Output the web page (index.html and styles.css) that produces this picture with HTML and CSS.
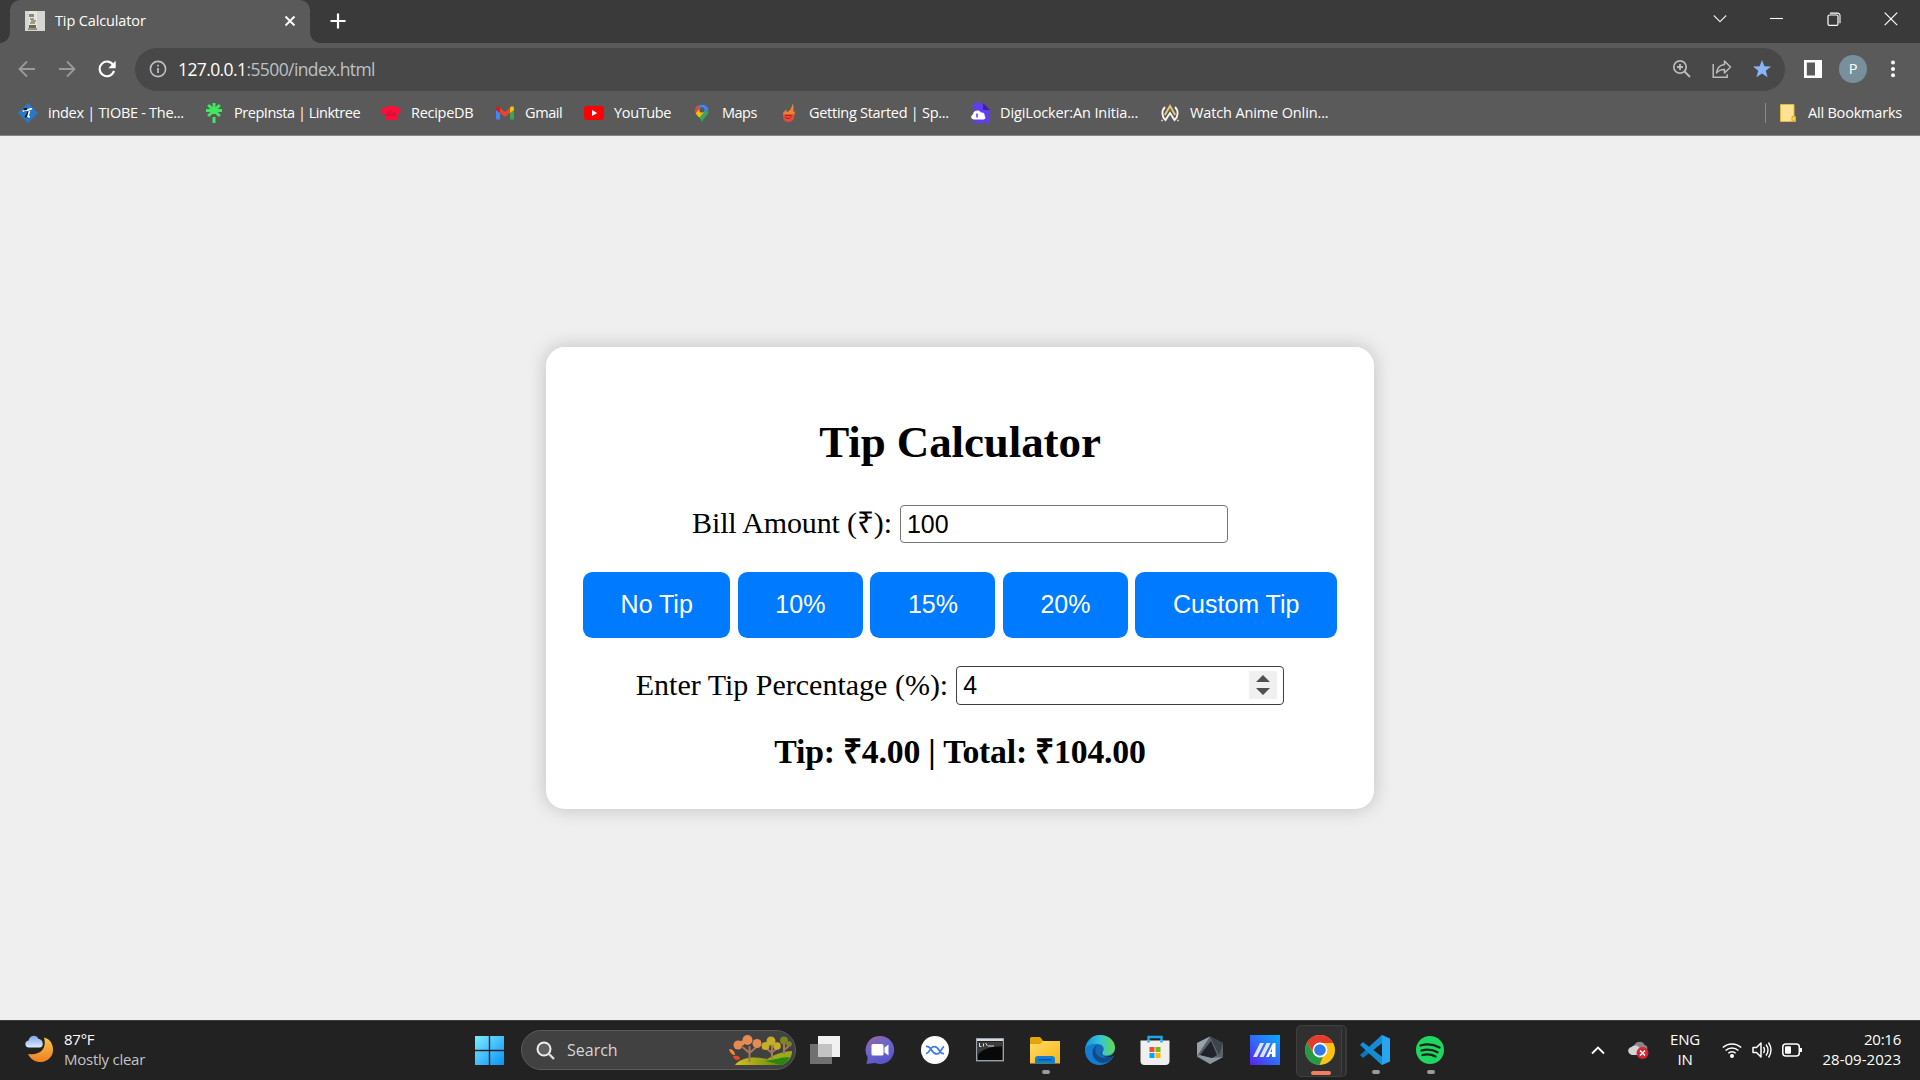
FILE: index.html
```html
<!DOCTYPE html>
<html lang="en">
<head>
<meta charset="utf-8">
<title>Tip Calculator</title>
<link rel="stylesheet" href="styles.css">
</head>
<body>
<header class="browser">
  <div class="tabstrip">
    <div class="tab">
      <svg class="favicon" width="20" height="20" viewBox="0 0 20 20"><rect width="20" height="20" fill="#d6d6d4"/><rect x="4" width="8" height="18" fill="#e6e5df"/><rect x="4" y="3" width="5" height="3" fill="#8b8a68"/><path d="M5 8h4M6 10h5M5 12h5" stroke="#55513f" stroke-width="1.2"/><rect x="4" y="14" width="7" height="3" fill="#70683f"/><path d="M3 18h9" stroke="#444" /></svg>
      <span class="tab-title">Tip Calculator</span>
      <svg class="tab-close" width="12" height="12" viewBox="0 0 12 12"><path d="M1.5 1.500l9 9M10.500 1.500l-9 9" stroke="#fff" stroke-width="1.900"/></svg>
    </div>
    <svg class="newtab" width="16" height="16" viewBox="0 0 16 16"><path d="M8 .5v15M.5 8h15" stroke="#fff" stroke-width="2.200"/></svg>
    <div class="window-controls">
      <svg width="14" height="14" viewBox="0 0 14 14"><path d="M.8 3.500L7 9.700 13.200 3.500" fill="none" stroke="#e8e8e8" stroke-width="1.100"/></svg>
      <svg width="14" height="14" viewBox="0 0 14 14"><path d="M0 6.500h13" stroke="#fff" stroke-width="1.100"/></svg>
      <svg width="14" height="14" viewBox="0 0 14 14"><rect x="1" y="3" width="10" height="10.400" rx="1.500" fill="none" stroke="#fff" stroke-width="1.200"/><path d="M3 1.100h7.500a2.500 2.500 0 0 1 2.500 2.500v7.700" fill="none" stroke="#fff" stroke-width="1.100"/></svg>
      <svg width="14" height="14" viewBox="0 0 14 14"><path d="M.7.700l12.500 12.500M13.200.7L.7 13.200" stroke="#fff" stroke-width="1.200"/></svg>
    </div>
  </div>

  <div class="toolbar">
    <div class="nav">
      <svg width="18" height="18" viewBox="0 0 18 18"><path d="M17 9H2M9 1.500L1.500 9 9 16.500" fill="none" stroke="#9a9a9a" stroke-width="1.800"/></svg>
      <svg width="18" height="18" viewBox="0 0 18 18"><path d="M1 9h15M9 1.500L16.500 9 9 16.500" fill="none" stroke="#9a9a9a" stroke-width="1.800"/></svg>
      <svg width="18" height="18" viewBox="0 0 18 18"><path d="M15.300 5.200A7.300 7.300 0 1 0 16 10.900" fill="none" stroke="#fff" stroke-width="2.100"/><path d="M17.700.8v7.400h-7.400z" fill="#fff"/></svg>
    </div>
    <div class="omnibox">
      <svg width="18" height="18" viewBox="0 0 18 18"><circle cx="9" cy="9" r="7.600" fill="none" stroke="#bdc1c6" stroke-width="1.600"/><path d="M9 8v5M9 4.800v1.700" stroke="#bdc1c6" stroke-width="1.700"/></svg>
      <span class="url"><b>127.0.0.1</b>:5500/index.html</span>
      <div class="omni-actions">
        <svg width="20" height="20" viewBox="0 0 20 20"><circle cx="8" cy="8" r="6.200" fill="none" stroke="#bcbcbc" stroke-width="1.700"/><path d="M8 5v6M5 8h6M12.500 12.500l5.500 5.500" stroke="#bcbcbc" stroke-width="1.800"/></svg>
        <svg width="20" height="20" viewBox="0 0 20 20"><path d="M1.200 5v13.300h14v-3" fill="none" stroke="#bcbcbc" stroke-width="1.500"/><path d="M12.500 2l6 6-6 6v-3.500C9 10.300 6.500 11.500 4.500 14 5 9.500 8 6 12.500 5.500z" fill="none" stroke="#bcbcbc" stroke-width="1.500" stroke-linejoin="round"/></svg>
        <svg width="20" height="20" viewBox="0 0 20 20"><path d="M10 1l2.400 6.300 6.600.3-5.200 4.200 1.800 6.500L10 14.600l-5.600 3.700 1.800-6.500L1 7.600l6.600-.3z" fill="#8ab4f8"/></svg>
      </div>
    </div>
    <svg class="sidepanel" width="18" height="18" viewBox="0 0 18 18"><path d="M0 0h18v18H0zM2.800 2.500v13H11v-13z" fill="#fff" fill-rule="evenodd"/></svg>
    <div class="avatar">P</div>
    <svg class="kebab" width="6" height="18" viewBox="0 0 6 18"><circle cx="3" cy="2.500" r="2" fill="#fff"/><circle cx="3" cy="9" r="2" fill="#fff"/><circle cx="3" cy="15.300" r="2" fill="#fff"/></svg>
  </div>

  <div class="bookmarks">
    <div class="bm-list">
      <div class="bm"><svg width="20" height="20" viewBox="0 0 20 20"><path d="M10 0l10 10-10 10L0 10z" fill="#2878c8"/><path d="M5 8.500c2-3 4-1 5-1.500s2-1.500 4-1" fill="none" stroke="#fff" stroke-width="1.800"/><path d="M5.500 6.500l3.500-.8M10.500 8.500c-1 3-1.500 4.500-3.500 5.500" fill="none" stroke="#111" stroke-width="1.900"/><path d="M11.500 8l-1.500 5.500 2 .5" fill="none" stroke="#fff" stroke-width="1.600"/></svg><span class="t1">index | TIOBE - The...</span></div>
      <div class="bm"><svg width="20" height="20" viewBox="0 0 20 20"><path d="M10 0v11M10 14v6M2 7.500h16M4.200 2l11.600 11M15.800 2L4.200 13" stroke="#43e660" stroke-width="3"/></svg><span class="t2">PrepInsta | Linktree</span></div>
      <div class="bm"><svg width="20" height="20" viewBox="0 0 20 20"><path d="M4 11C1 12-.5 9.500.5 7 1 4.500 4 3.500 6 4.500c1-2 6-2.500 8-.5 3-1 5.500.5 5.500 3 .8 3-1 4.500-3.500 4V17H4z" fill="#f8103a"/><path d="M5 12h10M7 9v2M10 8v2M13 9v2" stroke="#b30a30" stroke-width=".8"/></svg><span class="t3">RecipeDB</span></div>
      <div class="bm"><svg width="20" height="20" viewBox="0 0 20 20"><path d="M1 5v11.500h4V9z" fill="#4285f4"/><path d="M19 5v11.500h-4V9z" fill="#34a853"/><path d="M5 5l5 4 5-4v5l-5 4-5-4z" fill="#ea4335"/><path d="M1 6c-.3-3 2-3.500 4-1.500V10L1 7z" fill="#c5221f"/><path d="M19 6c.3-3-2-3.500-4-1.500V10l4-3z" fill="#fbbc04"/></svg><span class="t4">Gmail</span></div>
      <div class="bm"><svg width="20" height="20" viewBox="0 0 20 20"><rect y="3" width="20" height="14" rx="3" fill="#f00"/><path d="M8 7l5.200 3L8 13z" fill="#fff"/></svg><span class="t5">YouTube</span></div>
      <div class="bm"><svg width="20" height="20" viewBox="0 0 20 20"><path d="M3.500 9.500C4 13 9 14 10 20c1-6 6.500-7 6.500-12z" fill="#34a853"/><path d="M3.200 7a6.900 6.900 0 0 1 13.300-.5L8 13.500 5 12C3.800 10.500 3 9 3.200 7z" fill="#4285f4"/><path d="M4.700 2.500L9 6 4.400 11.200C3 8.500 2.600 5 4.700 2.500z" fill="#ea4335"/><path d="M3.800 10L8 5l4.500 3.500-5 6C6 13 4.500 12 3.800 10z" fill="#fbbc04"/><circle cx="9.900" cy="6.900" r="2.600" fill="#5a5a5a"/></svg><span class="t6">Maps</span></div>
      <div class="bm"><svg width="20" height="20" viewBox="0 0 20 20"><path d="M4 12c0-4 2-3 3-6 1 2 0 3 1 3 3-1 5-4 5.500-8.500C15.500 4 14 7 14.500 9l1-1c1 4-1 5-1 5z" fill="#f08332"/><path d="M4 11h11c.7 5-1.500 8-5.500 8S3.500 16 4 11z" fill="#ee4a35"/><path d="M6 13c2-.8 5-.8 7 0M6 14c1 2 5 2 6 0" fill="none" stroke="#862e2c"/></svg><span class="t7">Getting Started | Sp...</span></div>
      <div class="bm"><svg width="20" height="20" viewBox="0 0 20 20"><path d="M4 0h9l7 7v13H4z" fill="#613cf1"/><path d="M13 0v7h7z" fill="#3b239f"/><path d="M4 16.500c-3 0-4-4-1-5 0-4 6-5.500 8-2 3-.5 4 2 3.700 3.500 1.300 1 .8 3.500-1.500 3.500z" fill="#fff"/><path d="M7 10.500v4" stroke="#613cf1" stroke-width="1.500"/></svg><span class="t8">DigiLocker:An Initia...</span></div>
      <div class="bm"><svg width="20" height="20" viewBox="0 0 20 20"><path d="M5 4C1 8 2 14 5.500 17l4.500-7 4.500 7C18 14 19 8 15 4" fill="none" stroke="#f4f4f4" stroke-width="1.900"/><path d="M4.800 12L10 3l5.200 9" fill="none" stroke="#e7c574" stroke-width="2"/><path d="M1 17.500h2M17 17.500h2" stroke="#e7c574" stroke-width="1.600"/></svg><span class="t9">Watch Anime Onlin...</span></div>
    </div>
    <div class="all-bm">
      <svg width="16" height="18" viewBox="0 0 16 18"><path d="M.5.5H14v12h1.500v5H.5z" fill="#fde293" stroke="#e0b93e"/><path d="M12 17v-4.500h3.500V17z" fill="#f9d54e" stroke="#d6ab29"/></svg>
      <span class="t10">All Bookmarks</span>
    </div>
  </div>
</header>

<main class="page">
  <section class="card">
    <h1>Tip Calculator</h1>
    <div class="field bill">
      <label for="bill">Bill Amount (₹):</label>
      <div class="box"><input id="bill" type="text" value="100"></div>
    </div>
    <div class="tips">
      <button>No Tip</button>
      <button>10%</button>
      <button>15%</button>
      <button>20%</button>
      <button>Custom Tip</button>
    </div>
    <div class="field custom">
      <label for="pct">Enter Tip Percentage (%):</label>
      <div class="box active"><input id="pct" type="text" value="4"><svg class="spin" width="28" height="28" viewBox="0 0 28 28"><rect width="28" height="28" fill="#f0f0f0"/><path d="M14 4l7 7H7zM14 24l7-7H7z" fill="#505050"/></svg></div>
    </div>
    <div class="result">Tip: ₹4.00 | Total: ₹104.00</div>
  </section>
</main>

<footer class="taskbar">
  <div class="weather">
    <svg width="30" height="30" viewBox="0 0 30 30"><defs><linearGradient id="moon" x1="0" y1="0" x2="0" y2="1"><stop offset="0" stop-color="#f7c644"/><stop offset="1" stop-color="#ee7f24"/></linearGradient><linearGradient id="cl" x1="0" y1="0" x2="0" y2="1"><stop offset="0" stop-color="#7ba6ea"/><stop offset="1" stop-color="#dfe9fb"/></linearGradient></defs><path d="M19 2.500c7 1.500 10.500 9 8.500 16-3 10-19 12.500-24.500.5C16 21 22 13 19 2.500z" fill="url(#moon)"/><path d="M4 12.500c-4.500 0-5-6.500-.500-7C4.500 0 11.500-1 13.500 4c5 0 6 8.500 1 8.500z" fill="url(#cl)"/></svg>
    <div class="wtext"><span>87°F</span><span class="dim">Mostly clear</span></div>
  </div>
  <div class="start">
    <svg width="29" height="29" viewBox="0 0 29 29"><defs><linearGradient id="win" x1="0" y1="0" x2="1" y2="1"><stop offset="0" stop-color="#7deaff"/><stop offset="1" stop-color="#0a93f8"/></linearGradient></defs><path d="M0 0h13.800v13.800H0zM15.200 0H29v13.800H15.200zM0 15.200h13.800V29H0zM15.200 15.200H29V29H15.200z" fill="url(#win)"/></svg>
  </div>
  <div class="search">
    <svg width="19" height="19" viewBox="0 0 19 19"><circle cx="8" cy="8" r="6.500" fill="#606060" stroke="#eee" stroke-width="2"/><path d="M13 13l5 5" stroke="#ddd" stroke-width="2.400"/></svg>
    <span>Search</span>
    <svg class="trees" width="63" height="31" viewBox="0 0 63 31"><defs><linearGradient id="hill" x1="0" x2="1"><stop offset="0" stop-color="#d8bf16"/><stop offset="1" stop-color="#608d13"/></linearGradient></defs><path d="M31 28c8-4 16-11 32-12 .5 6-5 13-11 14H33z" fill="#9cac18"/><path d="M6 30c7-10 30-10 46 0z" fill="url(#hill)"/><path d="M36 26c9-1 16-4 25-4-2 4-5 7-9 8-5-1-9-3-16-4z" fill="#288512"/><path d="M20.500 27V11M20.500 18l-7-6M20.500 18l7-6M43 24V10M43 18l-6-5M43 17l6-4M55 19V9M55 15l5-4" fill="none" stroke="#a8765a" stroke-width="2"/><g fill="#e58b52"><circle cx="9" cy="10" r="4.500"/><circle cx="18.500" cy="5" r="5"/><circle cx="28" cy="8.500" r="4.500"/><circle cx="13" cy="8" r="2.500"/></g><g fill="#c6ae28"><circle cx="36.500" cy="11" r="4"/><circle cx="42" cy="6" r="4.500"/><circle cx="48" cy="11" r="3.800"/></g><g fill="#7f8424"><circle cx="55" cy="5.500" r="4"/><circle cx="60" cy="9" r="2.800"/></g><path d="M0 14c4 0 6 3 6 6-3 0-5-2-6-6z" fill="#f38836"/><path d="M4 21c4-1 7 0 7 3-3 2-6 1-7-3z" fill="#e54c29"/></svg>
  </div>
  <div class="apps">
    <div class="app"><svg width="30" height="30" viewBox="0 0 30 30"><rect x="8" y="1" width="22" height="21" fill="#f1f1f1"/><rect x="0" y="9" width="22" height="20" fill="#707070"/><rect x="8" y="9" width="14" height="13" fill="#c3c3c3"/></svg></div>
    <div class="app"><svg width="30" height="30" viewBox="0 0 30 30"><defs><linearGradient id="chat" x1="0" y1="0" x2=".5" y2="1"><stop offset="0" stop-color="#9e659f"/><stop offset=".5" stop-color="#6a66ca"/><stop offset="1" stop-color="#5c54cc"/></linearGradient></defs><path d="M15 1a14 14 0 1 1-5 27l-8.500 1 1.300-6.500A14 14 0 0 1 15 1z" fill="url(#chat)"/><rect x="6.500" y="9" width="12" height="11.500" rx="1.500" fill="#fff"/><path d="M19.500 12.500l4-3v11l-4-3z" fill="#fff"/></svg></div>
    <div class="app"><svg width="30" height="30" viewBox="0 0 30 30"><circle cx="15" cy="15" r="14" fill="#fff"/><path d="M6 11.500c3-.5 4 1 5.500 3.500s4 5 7 3.500c2-1 3.500-6 5.500-7M6 18.500c3 0 4-5 6.500-6.500 3-1.500 5 .5 6.500 3s2.500 4 5 3.500" fill="none" stroke="#3d7be8" stroke-width="1.700"/></svg></div>
    <div class="app"><svg width="30" height="30" viewBox="0 0 30 30"><rect x="1.700" y="3.700" width="26.600" height="22" fill="#080808" stroke="#9aa3ab" stroke-width="1.400"/><path d="M2 5h26" stroke="#d5dbe0" stroke-width="2"/><path d="M2.500 6.500h25v5C15 11 8 14 2.500 20z" fill="#3b3b3b"/><path d="M4.500 8v3.500h2M8.500 8.500v3M10.500 8l2 3M13 11h6" fill="none" stroke="#ddd"/></svg></div>
    <div class="app open"><svg width="30" height="30" viewBox="0 0 30 30"><defs><linearGradient id="fold" x1="0" y1="0" x2="1" y2="1"><stop stop-color="#ffdc68"/><stop offset="1" stop-color="#f8b511"/></linearGradient></defs><path d="M0 3.500Q0 2 1.500 2H10l3 3.500V10H0z" fill="#e5a50a"/><path d="M0 9h10l3-3h17v22.500H0z" fill="url(#fold)"/><path d="M5 28.500V24q0-3 3-3h14q3 0 3 3v4.500z" fill="#1080d2"/><path d="M9 24.800h12" stroke="#0756a0" stroke-width="1.500" stroke-linecap="round"/></svg></div>
    <div class="app"><svg width="30" height="30" viewBox="0 0 30 30"><defs><linearGradient id="edge" x1="0" y1="0" x2="1" y2="0"><stop stop-color="#1596d8"/><stop offset=".5" stop-color="#35c4d6"/><stop offset="1" stop-color="#65da4c"/></linearGradient></defs><circle cx="15" cy="15" r="15" fill="#1668b5"/><path d="M0 15C1 6 7 0 15 0c9 0 15 6 15 12.500 0 5-4 8-8.500 8-4 0-5-2-3.500-4 2-3 0-7.500-6-7.500C7 9 2 11 0 15z" fill="url(#edge)"/><path d="M0 15c2-5 7-7 12-5.500C7 12 6 18 9 23c3 5 9 7 14 4-8 6-22 3-23-12z" fill="#147dd0"/><path d="M12 10c-4 4-1 12 6 13 4 .5 7-.5 10-2-4 8-13 8-17 4-5-5-4-13 1-15z" fill="#114a8a"/><path d="M17 17c-1 3 1 5 5 4.500 3 0 6-1.500 8-5.500v5l-2 0c-4 2-7 1.500-9 .5s-4-3-2-4.500z" fill="#222"/></svg></div>
    <div class="app"><svg width="30" height="30" viewBox="0 0 30 30"><path d="M8.500 7V2h13v5" fill="none" stroke="#1aa9e8" stroke-width="2.400"/><path d="M.5 5.500h29V26q0 4-4 4h-21q-4 0-4-4z" fill="#efefef"/><path d="M8.500 7.500v-2M21.500 7.500v-2" stroke="#1aa9e8" stroke-width="2.400"/><path d="M9.500 12h5v5h-5z" fill="#f04e24"/><path d="M15.500 12h5v5h-5z" fill="#7fb900"/><path d="M9.500 18h5v5h-5z" fill="#06a3ee"/><path d="M15.500 18h5v5h-5z" fill="#feb804"/></svg></div>
    <div class="app"><svg width="30" height="30" viewBox="0 0 30 30"><path d="M15 1.500l13 6.500v14l-13 7L2 22V8z" fill="#59626b"/><path d="M15 1.500l13 6.500-4 12z" fill="#3d444c"/><path d="M15 1.500L2 8v13z" fill="#99a1a9"/><path d="M2 21l3-1 12 3 11-1-13 7z" fill="#8d969e"/><path d="M16 6l6 14-5 3-12-3z" fill="#20242a"/></svg></div>
    <div class="app"><svg width="30" height="30" viewBox="0 0 30 30"><defs><linearGradient id="asus" x1="0" y1="1" x2="1" y2="0"><stop stop-color="#5b20ef"/><stop offset=".5" stop-color="#2f6df8"/><stop offset="1" stop-color="#08abff"/></linearGradient></defs><path d="M0 0h30v30H0z" fill="url(#asus)"/><path d="M3 22L10 8h4L7 22zM9.500 22l7-14h4l-7 14z" fill="#dfe3ff"/><path d="M16 22l7-14h2.500v14H22v-3h-2l-1 3zM20.500 17H22v-4z" fill="#fff" fill-rule="evenodd"/></svg></div>
    <div class="app chrome"><svg width="30" height="30" viewBox="0 0 30 30"><circle cx="15" cy="15" r="15" fill="#fbc116"/><path d="M15 0c6 0 11 3 13.300 8H15a7 7 0 0 0-6.300 10L2 7.500C5 3 9 0 15 0z" fill="#e33b2e"/><path d="M2 7.500l6.800 11.200A7 7 0 0 0 18 21.500L14.500 30C2 29.500-3 17 2 7.500z" fill="#279847"/><circle cx="15" cy="15" r="7.400" fill="#fff"/><circle cx="15" cy="15" r="5.800" fill="#3079e8"/></svg></div>
    <div class="app open"><svg width="30" height="30" viewBox="0 0 30 30"><path d="M22 0l8 3.500v23L22 30z" fill="#28a5f1"/><path d="M22 0v8L3 23l-3-3z" fill="#0877bd"/><path d="M22 30v-8L3 7l-3 3z" fill="#1290dc"/><path d="M22 0v8l-9 7-4-3zM22 30v-8l-9-7-4 3z" fill="#168bd0"/></svg></div>
    <div class="app open"><svg width="30" height="30" viewBox="0 0 30 30"><circle cx="15" cy="15" r="14" fill="#1ed760"/><path d="M5.500 10.500c6.500-2 13-1.300 19 2M6.500 15.500c5.500-1.600 11-1 16 1.700M7.500 20c4.500-1.200 9-.8 13 1.500" fill="none" stroke="#1b211d" stroke-width="2.300" stroke-linecap="round"/></svg></div>
  </div>
  <div class="tray">
    <svg class="caret" width="14" height="10" viewBox="0 0 14 10"><path d="M1 8.500l6-6 6 6" fill="none" stroke="#fff" stroke-width="1.900"/></svg>
    <svg class="cloud" width="21" height="18" viewBox="0 0 21 18"><path d="M6 5c1-5 9-6 10.500-1C19 4 20 7 19 9l-6 3z" fill="#888"/><path d="M4 14c-5-1-5-7-.5-8C7 3 12 5 12 9l-2 5z" fill="#d4d4d4"/><circle cx="14.500" cy="12" r="6" fill="#d72532"/><path d="M12 9.500l5 5M17 9.500l-5 5" stroke="#fff" stroke-width="1.500"/></svg>
    <div class="lang"><span>ENG</span><span>IN</span></div>
    <div class="status">
      <svg width="20" height="18" viewBox="0 0 20 18"><path d="M.8 6.500a13.500 13.500 0 0 1 18.400 0M3.600 9.500a9.400 9.400 0 0 1 12.800 0M6.300 12.300a5.500 5.500 0 0 1 7.400 0" fill="none" stroke="#fff" stroke-width="1.500"/><circle cx="10" cy="15" r="2" fill="#fff"/></svg>
      <svg width="20" height="18" viewBox="0 0 20 18"><path d="M1 6.500h3.500L9 2v14l-4.500-4.500H1z" fill="none" stroke="#fff" stroke-width="1.500" stroke-linejoin="round"/><path d="M11.500 6q2 3 0 6M14 3.500q4 5.500 0 11M16.500 1.500q5 7.500 0 15" fill="none" stroke="#fff" stroke-width="1.400"/></svg>
      <svg width="20" height="18" viewBox="0 0 20 18"><rect x=".8" y="3" width="16.500" height="12" rx="3" fill="none" stroke="#fff" stroke-width="1.500"/><rect x="3" y="5.200" width="6" height="7.600" rx="1" fill="#fff"/><path d="M19 7v4" stroke="#fff" stroke-width="2"/></svg>
    </div>
    <div class="clock"><span>20:16</span><span class="date">28-09-2023</span></div>
  </div>
</footer>
</body>
</html>
```
FILE: styles.css
```css
* { box-sizing: border-box; }
html, body { margin: 0; height: 100%; }
body {
  width: 1920px; height: 1080px; overflow: hidden;
  display: flex; flex-direction: column;
  font-family: "Open Sans", "Noto Sans", sans-serif;
  background: #efefef;
}
svg { display: block; flex: none; }

.browser { height: 136px; flex: none; background: #5a5a5a; color: #fff; border-bottom: 1px solid #858585; }
.tabstrip { height: 43px; background: #3a3a3a; display: flex; align-items: center; padding-left: 10px; }
.tab {
  width: 300px; height: 43px; background: #5a5a5a; border-radius: 10px 10px 0 0;
  display: flex; align-items: center; padding: 0 14px 0 15px; position: relative;
}
.tab::before, .tab::after { content: ""; position: absolute; bottom: 0; width: 10px; height: 10px; }
.tab::before { left: -10px; background: radial-gradient(circle at 0 0, #3a3a3a 9.5px, #5a5a5a 10px); }
.tab::after { right: -10px; background: radial-gradient(circle at 100% 0, #3a3a3a 9.5px, #5a5a5a 10px); }
.favicon, .tab-close { margin-top: -1px; }
.tab-title { font-size: 14.5px; margin: -2px 0 0 10px; white-space: nowrap; letter-spacing: -.13px; line-height: 20px; }
.tab-close { margin-left: auto; }
.newtab { margin: -1px 0 0 20px; }
.window-controls { margin-left: auto; display: flex; gap: 43px; padding-right: 22px; margin-top: -6px; }

.toolbar { height: 53px; display: flex; align-items: center; padding-bottom: 1px; }
.nav { width: 135px; display: flex; gap: 22px; padding-left: 18px; margin-top: -1px; }
.omnibox {
  width: 1650px; height: 43px; border-radius: 22px; background: #484848;
  display: flex; align-items: center; padding: 0 14px;
}
.url { margin-left: 11px; font-size: 17.5px; letter-spacing: -.6px; color: #bdc1c6; line-height: 24px; white-space: nowrap; }
.url b { font-weight: 400; color: #fff; }
.omni-actions { margin-left: auto; display: flex; gap: 20px; margin-right: -1px; }
.sidepanel { margin-left: 19px; }
.avatar {
  width: 28px; height: 28px; border-radius: 50%; background: #78909c; margin-left: 17px;
  font-size: 14.5px; line-height: 27px; text-align: center;
}
.kebab { margin-left: 23px; }

.bookmarks { height: 39px; display: flex; align-items: center; padding-left: 18px; padding-bottom: 5px; font-size: 14.5px; }
.bm-list { display: grid; grid-template-columns: 186px 177px 114px 89px 108px 87px 191px 190px 190px; }
.bm, .all-bm { display: flex; align-items: center; gap: 10px; white-space: nowrap; line-height: 20px; letter-spacing: -.4px; }
.t1, .t3, .t7 { letter-spacing: -.28px; }
.t2 { letter-spacing: -.46px; }
.t5 { letter-spacing: -.35px; }
.t6 { letter-spacing: -.5px; }
.t8, .t9 { letter-spacing: -.13px; }
.t10 { letter-spacing: -.2px; }
.all-bm { margin-left: auto; width: 155px; height: 20px; border-left: 1px solid #8a8a8a; padding-left: 14px; gap: 12px; }

.page { height: 884px; flex: none; display: flex; justify-content: center; align-items: flex-start; padding-top: 211px; background: #efefef; }
.card {
  width: 828px; height: 462px; background: #fff; border-radius: 18.75px;
  box-shadow: 0 0 18.75px rgba(0, 0, 0, .2);
  font-family: "Liberation Serif", serif; color: #000;
  display: flex; flex-direction: column; align-items: center;
}
.card h1 { margin: 69px 0 0; font-size: 45px; line-height: 52px; font-weight: 700; letter-spacing: -.1px; }
.field { display: flex; align-items: center; gap: 8px; font-size: 30px; line-height: 34px; white-space: nowrap; }
.field label { padding-bottom: 2px; }
.bill { margin-top: 37px; height: 38px; }
.bill label { letter-spacing: -.14px; }
.box { width: 328px; height: 38px; border: 1px solid #767676; border-radius: 4px; display: flex; align-items: center; padding: 0 6px; }
.box.active { border-color: #3f3f3f; height: 39px; padding-bottom: 1px; }
.box input { flex: 1; min-width: 0; border: 0; padding: 0; outline: 0; background: none; font: 25px/28px "Liberation Sans", sans-serif; color: #000; }
.tips { margin-top: 29px; display: flex; gap: 7.5px; }
.tips button {
  height: 66px; border: 0; border-radius: 9.4px; background: #007bff; color: #fff;
  padding: 0 37.5px 1px; font: 25px "Liberation Sans", sans-serif;
}
.custom { margin-top: 28px; }
.result { margin-top: 27px; font-size: 33.75px; line-height: 39px; font-weight: 700; letter-spacing: -.2px; }

.taskbar { height: 60px; flex: none; background: #222; border-top: 1px solid #3a3d3b; display: flex; align-items: center; padding-bottom: 1px; color: #fff; font-size: 15px; }
.weather { width: 475px; display: flex; gap: 9px; padding-left: 25px; align-items: center; }
.wtext, .lang, .clock { display: flex; flex-direction: column; line-height: 20px; letter-spacing: -.25px; margin-top: -2px; }
.dim { color: #c4c4c4; }
.start { width: 46px; }
.search {
  width: 275px; height: 40px; border-radius: 20px; background: #414141; border: 1px solid #5b5b5b;
  display: flex; align-items: center; padding: 0 3px 0 14px; color: #d5d5d5; font-size: 16px;
}
.search span { margin-left: 12px; letter-spacing: 0; }
.trees { margin-left: auto; }
.apps { display: flex; margin-left: 2px; }
.app { width: 55px; height: 58px; display: flex; align-items: center; justify-content: center; position: relative; }
.app.open::after, .app.chrome::after { content: ""; position: absolute; bottom: 5px; left: 23.5px; width: 8px; height: 4px; border-radius: 2px; background: #9a9a9a; }
.app.chrome::after { width: 20px; left: 17.5px; bottom: 4px; background: #f47c62; }
.app.chrome::before {
  content: ""; position: absolute; left: 3px; top: 4px; width: 44px; height: 50px;
  border-radius: 5px; background: #303030; border: 1px solid #404040; box-shadow: 4px 0 0 -1px #2b2b2b, 5px 0 0 0 #3a3a3a;
}
.app svg { position: relative; left: -.5px; }
.tray { margin-left: auto; display: flex; align-items: center; padding-right: 19px; }
.cloud { margin-left: 23px; }
.lang { width: 60px; margin-left: 6px; text-align: center; }
.status { display: flex; gap: 10px; margin-left: 7px; }
.clock { width: 99px; text-align: right; }
.date { letter-spacing: .03px; }
```
